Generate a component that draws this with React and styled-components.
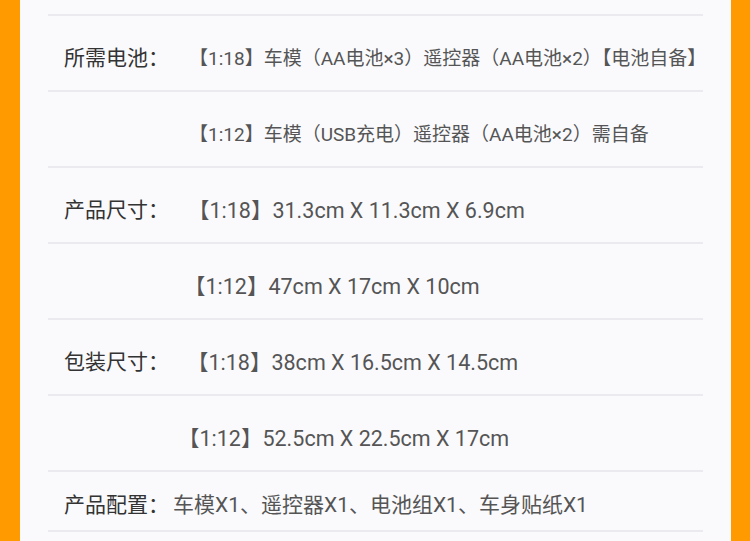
import styled, { createGlobalStyle } from "styled-components";

const GlobalStyle = createGlobalStyle`
  html, body {
    margin: 0;
    padding: 0;
    background: #ff9a00;
  }
  body {
    font-family: Roboto, "Noto Sans CJK SC", "Noto Sans", sans-serif;
  }
`;

const Frame = styled.div`
  width: 750px;
  height: 541px;
  box-sizing: border-box;
  padding: 0 19px 0 20px;
  background: #ff9a00;
  overflow: hidden;
`;

const Sheet = styled.div`
  height: 100%;
  background: #fafafd;
  padding: 14px 28px 0;
`;

const List = styled.div`
  border-top: 2px solid #ebebef;
`;

const Row = styled.div`
  display: flex;
  align-items: center;
  box-sizing: border-box;
  height: ${(props) => props.h || 76}px;
  padding: ${(props) => props.shift || 6}px 0 0 16px;
  border-bottom: 2px solid #ebebef;
  white-space: nowrap;
`;

const Label = styled.span`
  font-size: 21px;
  color: #333;
  width: ${(props) => props.w || 124}px;
  flex-shrink: 0;
`;

const Value = styled.span`
  font-size: ${(props) => props.size || 21.5}px;
  color: #555;
  margin-left: ${(props) => props.indent || 0}px;
`;

const rows = [
  { label: "所需电池：", value: "【1:18】车模（AA电池×3）遥控器（AA电池×2）【电池自备】", size: 19, indent: 1 },
  { value: "【1:12】车模（USB充电）遥控器（AA电池×2）需自备", size: 19, indent: 1 },
  { label: "产品尺寸：", value: "【1:18】31.3cm X 11.3cm X 6.9cm", indent: 0 },
  { value: "【1:12】47cm X 17cm X 10cm", indent: -4 },
  { label: "包装尺寸：", value: "【1:18】38cm X 16.5cm X 14.5cm", indent: -1 },
  { value: "【1:12】52.5cm X 22.5cm X 17cm", indent: -10 },
  { label: "产品配置：", value: "车模X1、遥控器X1、电池组X1、车身贴纸X1", labelW: 109, size: 21, h: 60, shift: 3 },
];

export default function App() {
  return (
    <>
      <GlobalStyle />
      <Frame>
        <Sheet>
          <List>
            {rows.map((r, i) => (
              <Row key={i} h={r.h} shift={r.shift}>
                <Label w={r.labelW}>{r.label || ""}</Label>
                <Value size={r.size} indent={r.indent}>
                  {r.value}
                </Value>
              </Row>
            ))}
          </List>
        </Sheet>
      </Frame>
    </>
  );
}
